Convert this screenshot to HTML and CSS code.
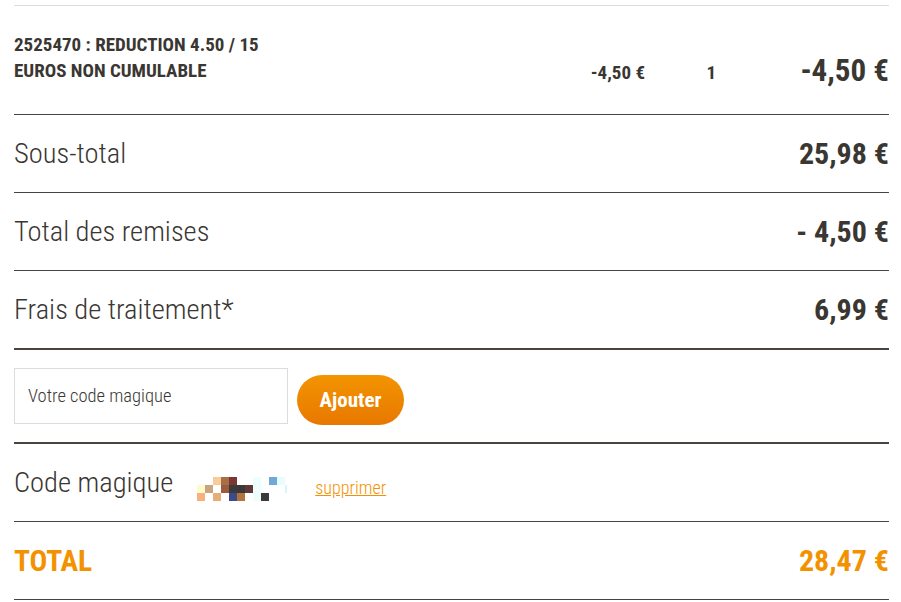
FILE: index.html
```html
<!DOCTYPE html>
<html lang="fr">
<head>
<meta charset="utf-8">
<link rel="stylesheet" href="styles.css">
</head>
<body>
<div class="cart">
  <div class="item">
    <div class="item-name">2525470 : REDUCTION 4.50 / 15<br>EUROS NON CUMULABLE</div>
    <div class="item-unit">-4,50 €</div>
    <div class="item-qty">1</div>
    <div class="item-total">-4,50 €</div>
  </div>
  <div class="row">
    <div class="label">Sous-total</div>
    <div class="value">25,98 €</div>
  </div>
  <div class="row">
    <div class="label">Total des remises</div>
    <div class="value">- 4,50 €</div>
  </div>
  <div class="row row-last">
    <div class="label">Frais de traitement*</div>
    <div class="value">6,99 €</div>
  </div>
  <div class="code-form">
    <div class="code-input">Votre code magique</div>
    <button class="code-btn">Ajouter</button>
  </div>
  <div class="row code-row">
    <div class="label">Code magique</div>
    <svg class="code-img" width="91" height="24" viewBox="0 0 91 24">
      <rect x="16" y="0" width="8" height="8" fill="#f8cc98"/>
      <rect x="24" y="0" width="8" height="8" fill="#a86e44"/>
      <rect x="32" y="0" width="8" height="8" fill="#7b3636"/>
      <rect x="56" y="0" width="8" height="8" fill="#eefefe"/>
      <rect x="72" y="0" width="8" height="8" fill="#72a8d8"/>
      <rect x="80" y="0" width="8" height="8" fill="#e6fdfd"/>
      <rect x="0" y="8" width="8" height="8" fill="#fefccc"/>
      <rect x="8" y="8" width="8" height="8" fill="#c8a57e"/>
      <rect x="24" y="8" width="8" height="8" fill="#9c5c3c"/>
      <rect x="32" y="8" width="8" height="8" fill="#3b3b3b"/>
      <rect x="40" y="8" width="8" height="8" fill="#3d3838"/>
      <rect x="48" y="8" width="8" height="8" fill="#5f3939"/>
      <rect x="56" y="8" width="8" height="8" fill="#eefefe"/>
      <rect x="88" y="8" width="2" height="8" fill="#d8f6fa"/>
      <rect x="0" y="16" width="8" height="8" fill="#f8b07c"/>
      <rect x="16" y="16" width="8" height="8" fill="#e8ac78"/>
      <rect x="32" y="16" width="8" height="8" fill="#3c4b8c"/>
      <rect x="40" y="16" width="8" height="8" fill="#b0743c"/>
      <rect x="56" y="16" width="8" height="8" fill="#eefefe"/>
      <rect x="64" y="16" width="8" height="8" fill="#3b3b3b"/>
    </svg>
    <a class="remove" href="#">supprimer</a>
  </div>
  <div class="row total-row">
    <div class="label total-label">TOTAL</div>
    <div class="value total-value">28,47 €</div>
  </div>
</div>
</body>
</html>
```
FILE: styles.css
```css
html, body {
  margin: 0;
  padding: 0;
  background: #fff;
}
body {
  font-family: Roboto, "Liberation Sans", sans-serif;
  font-stretch: 75%;
  color: #3a3632;
}
.cart {
  margin: 5px 12px 0 14px;
  border-top: 1px solid #dedede;
}
.item {
  display: flex;
  align-items: center;
  height: 108px;
  border-bottom: 1px solid #4a4440;
}
.item-name {
  flex: 1;
  font-weight: bold;
  font-size: 19px;
  line-height: 26px;
  margin-top: -5px;
}
.item-unit {
  font-weight: bold;
  font-size: 19px;
  margin-top: 24px;
}
.item-qty {
  width: 71px;
  text-align: right;
  font-weight: bold;
  font-size: 19px;
  margin-top: 24px;
}
.item-total {
  width: 173px;
  text-align: right;
  font-weight: bold;
  font-size: 31px;
  margin-top: 20px;
}
.row {
  display: flex;
  align-items: center;
  height: 77px;
  border-bottom: 1px solid #4a4440;
}
.row-last {
  border-bottom-width: 2px;
}
.label {
  flex: 1;
  font-size: 28.5px;
  font-weight: 300;
}
.value {
  font-size: 30px;
  font-weight: bold;
}
.code-form {
  display: flex;
  align-items: flex-start;
  height: 94px;
  box-sizing: border-box;
  padding-top: 18px;
  border-bottom: 2px solid #4a4440;
}
.code-input {
  width: 274px;
  height: 56px;
  box-sizing: border-box;
  border: 1px solid #dcdcdc;
  padding: 16px 13px 0;
  font-size: 18.5px;
  font-weight: 300;
  color: #3a3632;
}
.code-btn {
  margin: 7px 0 0 9px;
  width: 107px;
  height: 50px;
  border: none;
  border-radius: 25px;
  background: linear-gradient(#f39400, #e87800);
  color: #fff;
  font-family: inherit;
  font-stretch: 75%;
  font-weight: bold;
  font-size: 21px;
  padding: 0;
}
.code-row .label {
  flex: 0 0 auto;
}
.code-img {
  margin: 13px 0 0 24px;
}
.remove {
  margin: 10px 0 0 27px;
  color: #f39200;
  font-size: 18px;
  font-weight: 300;
}
.total-label, .total-value {
  color: #f39200;
  font-weight: bold;
}
.total-label {
  font-size: 29.5px;
}
```
